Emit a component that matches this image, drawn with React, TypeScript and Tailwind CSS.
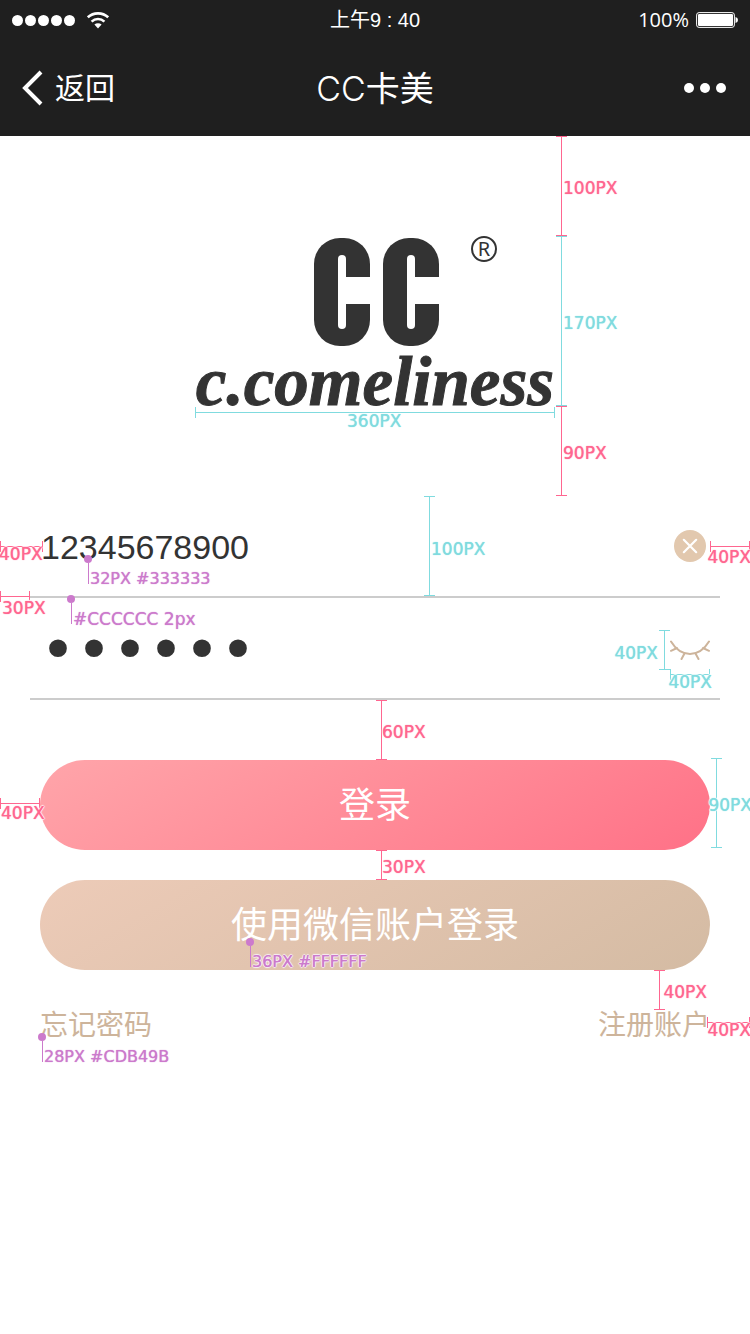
import React, { useState } from "react";

const TONES = {
  pink: "text-[#ff6690]",
  cyan: "text-[#80dbdf]",
  purple: "text-[#cc7acc]",
};

type Tone = keyof typeof TONES;

const HALO =
  "[text-shadow:0_0_1px_currentColor,1px_0_1px_#fff,-1px_0_1px_#fff,0_1px_1px_#fff,0_-1px_1px_#fff]";

/** Vertical dimension line with end caps. */
function VLine({ tone, at }: { tone: Tone; at: string }) {
  return (
    <span
      className={`pointer-events-none absolute flex w-[11px] justify-center border-y border-current ${TONES[tone]} ${at}`}
    >
      <span className="w-px bg-current" />
    </span>
  );
}

/** Horizontal dimension line with end caps. */
function HLine({ tone, at }: { tone: Tone; at: string }) {
  return (
    <span
      className={`pointer-events-none absolute flex h-[11px] flex-col justify-center border-x border-current ${TONES[tone]} ${at}`}
    >
      <span className="h-px bg-current" />
    </span>
  );
}

function Label({ tone, at, children }: { tone: Tone; at: string; children: React.ReactNode }) {
  return (
    <span
      className={`pointer-events-none absolute font-['DejaVu_Sans',sans-serif] text-[17px] leading-5 whitespace-nowrap ${HALO} ${TONES[tone]} ${at}`}
    >
      {children}
    </span>
  );
}

/** Style note: a dot on the described element, a stem, and the text. */
function Note({ at, large, children }: { at: string; large?: boolean; children: React.ReactNode }) {
  return (
    <span className={`pointer-events-none absolute flex items-end text-[#cc7acc] ${at}`}>
      <span className="flex w-2 flex-col items-center">
        <span className="size-2 rounded-full bg-current" />
        <span className="h-[21px] w-px bg-current" />
      </span>
      <span
        className={`-mb-[5px] -ml-0.5 font-['DejaVu_Sans',sans-serif] leading-5 whitespace-nowrap ${
          large ? "text-[17px]" : "text-[16px]"
        } ${HALO}`}
      >
        {children}
      </span>
    </span>
  );
}

function StatusBar() {
  return (
    <div className="flex h-10 items-center justify-between px-3">
      <div className="flex flex-1 items-center gap-3">
        <div className="flex gap-[2px]">
          {[0, 1, 2, 3, 4].map((i) => (
            <span key={i} className="size-[11px] rounded-full bg-white" />
          ))}
        </div>
        <svg width="22" height="18" viewBox="0 0 22 18" fill="none" stroke="#fff" strokeWidth="2.6">
          <path d="M.8 6.400C6.400 1 15.600 1 21.200 6.400" />
          <path d="M4.600 10.600c3.600-3.400 9.200-3.400 12.800 0" />
          <path d="M7.400 13.600c2.200-1.900 5-1.900 7.200 0L11 17.400z" fill="#fff" stroke="none" />
        </svg>
      </div>
      <span className="text-[20px] leading-6">上午9 : 40</span>
      <div className="flex flex-1 items-center justify-end gap-[7px]">
        <span className="font-['Open_Sans','Noto_Sans',sans-serif] text-[20px] leading-6">100%</span>
        <svg width="42" height="16" viewBox="0 0 42 16">
          <rect x=".6" y=".6" width="37.800" height="14.800" rx="2.500" fill="none" stroke="#fff" strokeWidth="1" />
          <rect x="2" y="2" width="35" height="12" rx="1.200" fill="#fff" />
          <path d="M39.500 5q2.500.5 2.500 3t-2.500 3z" fill="#fff" />
        </svg>
      </div>
    </div>
  );
}

function NavBar() {
  return (
    <div className="grid h-24 grid-cols-3 items-center px-[22px]">
      <button type="button" className="flex items-center gap-3 justify-self-start text-[30px] leading-9">
        <svg width="21" height="36" viewBox="0 0 21 36" fill="none" stroke="#fff" strokeWidth="4">
          <path d="M19 2 3 18l16 16" />
        </svg>
        <span className="pt-[2px]">返回</span>
      </button>
      <h1 className="pt-[2px] text-center text-[34px] leading-10 whitespace-nowrap">
        <span className="font-['Inter',sans-serif] font-light">CC</span>卡美
      </h1>
      <button type="button" aria-label="更多" className="flex gap-[6px] justify-self-end pr-[2px]">
        {[0, 1, 2].map((i) => (
          <span key={i} className="size-[10px] rounded-full bg-white" />
        ))}
      </button>
    </div>
  );
}

function MarkShape() {
  return (
    <span className="relative block h-[108px] w-14 rounded-[26px] bg-[#333]">
      <span className="absolute top-[17px] left-6 h-[74px] w-2 rounded-full bg-white" />
      <span className="absolute top-[39px] right-0 left-7 h-[27px] bg-white" />
    </span>
  );
}

function Logo() {
  return (
    <div className="relative mx-auto flex h-[170px] w-[360px] flex-col items-center text-[#333]">
      <div role="img" aria-label="CC" className="flex gap-[13px] pt-[2px] pl-[3px]">
        <MarkShape />
        <MarkShape />
      </div>
      <span className="absolute top-0 right-[58px] flex size-[26px] items-center justify-center rounded-full border-2 border-[#333] font-['Noto_Sans',sans-serif] text-[20px] leading-5">
        R
      </span>
      <p className="font-['Liberation_Serif',serif] text-[69px] leading-[72px] font-bold whitespace-nowrap italic [-webkit-text-stroke:1px_#333]">
        c.comeliness
      </p>
    </div>
  );
}

export default function App() {
  const [phone, setPhone] = useState("12345678900");
  const [password, setPassword] = useState("123456");
  const [visible, setVisible] = useState(false);

  return (
    <div className="min-h-screen w-full overflow-x-hidden bg-white font-['Liberation_Sans','Noto_Sans_CJK_SC',sans-serif]">
      <header className="bg-[#1f1f1f] text-white">
        <StatusBar />
        <NavBar />
      </header>

      <main>
        <section className="relative pt-[100px] pb-[90px]">
          <Logo />
          <VLine tone="cyan" at="left-[556px] top-[100px] h-[170px]" />
          <VLine tone="pink" at="left-[556px] top-0 h-[100px]" />
          <Label tone="pink" at="left-[563px] top-[42px]">100PX</Label>
          <Label tone="cyan" at="left-[563px] top-[177px]">170PX</Label>
          <VLine tone="pink" at="left-[556px] top-[270px] h-[90px]" />
          <Label tone="pink" at="left-[563px] top-[307px]">90PX</Label>
          <HLine tone="cyan" at="left-[195px] top-[271px] w-[360px]" />
          <Label tone="cyan" at="left-[347px] top-[275px]">360PX</Label>
        </section>

        <form onSubmit={(e) => e.preventDefault()}>
          <div className="relative px-[30px]">
            <div className="flex h-[102px] items-center border-b-2 border-[#ccc] px-[10px]">
              <input
                type="tel"
                aria-label="手机号"
                value={phone}
                onChange={(e) => setPhone(e.target.value)}
                className="h-20 min-w-0 flex-1 bg-transparent pt-[2px] pl-px text-[34px] text-[#333] outline-none"
              />
              <button
                type="button"
                aria-label="清除"
                onClick={() => setPhone("")}
                className="flex size-10 items-center justify-center"
              >
                <svg width="32" height="32" viewBox="0 0 32 32">
                  <circle cx="16" cy="16" r="16" fill="#e2c8ae" />
                  <path d="m9.800 9.800 12.400 12.400m0-12.400-12.400 12.400" stroke="#fff" strokeWidth="2.200" strokeLinecap="round" />
                </svg>
              </button>
            </div>
            <HLine tone="pink" at="left-0 top-[45px] w-[43px]" />
            <Label tone="pink" at="-left-px top-[48px]">40PX</Label>
            <HLine tone="pink" at="right-0 top-[45px] w-10" />
            <Label tone="pink" at="-right-px top-[51px]">40PX</Label>
            <VLine tone="cyan" at="left-[424px] top-0 h-[100px]" />
            <Label tone="cyan" at="left-[431px] top-[43px]">100PX</Label>
            <Note at="left-[84px] top-[59px]">32PX #333333</Note>
            <HLine tone="pink" at="left-0 top-[95px] w-[30px]" />
            <Label tone="pink" at="left-[2px] top-[102px]">30PX</Label>
            <Note large at="left-[67px] top-[99px]">#CCCCCC 2px</Note>
          </div>

          <div className="relative px-[30px]">
            <div className="flex h-[102px] items-center border-b-2 border-[#ccc] px-[10px]">
              <input
                type={visible ? "text" : "password"}
                aria-label="密码"
                value={password}
                onChange={(e) => setPassword(e.target.value)}
                className="h-20 min-w-0 flex-1 bg-transparent pt-1 font-['DejaVu_Sans',sans-serif] text-[61px] text-[#333] outline-none"
              />
              <button type="button" aria-label="显示密码" onClick={() => setVisible(!visible)}>
                <svg
                  width="40"
                  height="40"
                  viewBox="0 0 40 40"
                  fill="none"
                  stroke="#cdb49b"
                  strokeWidth="2"
                  strokeLinecap="round"
                >
                  <path d="M1 13.500c10 16.500 28 16.500 38 0M7 20 1 22.800M33 20 39 22.800M14.500 25.500l-3 5.500M25.500 25.500l3 5.500" />
                </svg>
              </button>
            </div>
            <VLine tone="cyan" at="right-[80px] top-8 h-10" />
            <Label tone="cyan" at="right-[92px] top-[45px]">40PX</Label>
            <HLine tone="cyan" at="right-10 top-[71px] w-10" />
            <Label tone="cyan" at="right-[38px] top-[74px]">40PX</Label>
          </div>

          <div className="relative flex flex-col gap-[30px] px-10 pt-[60px] text-[36px] text-white">
            <button type="submit" className="h-[90px] rounded-full bg-linear-150 from-[#ffa5aa] to-[#ff7187] pt-[2px]">
              登录
            </button>
            <button type="button" className="h-[90px] rounded-full bg-linear-150 from-[#edcbb8] to-[#d4bba3] pt-[2px]">
              使用微信账户登录
            </button>
            <VLine tone="pink" at="left-[376px] top-0 h-[60px]" />
            <Label tone="pink" at="left-[382px] top-[22px]">60PX</Label>
            <HLine tone="pink" at="left-0 top-[98px] w-10" />
            <Label tone="pink" at="left-px top-[103px]">40PX</Label>
            <VLine tone="cyan" at="right-7 top-[58px] h-[90px]" />
            <Label tone="cyan" at="-right-[2px] top-[95px]">90PX</Label>
            <VLine tone="pink" at="left-[376px] top-[150px] h-[30px]" />
            <Label tone="pink" at="left-[382px] top-[157px]">30PX</Label>
            <Note at="left-[246px] top-[238px]">36PX #FFFFFF</Note>
          </div>

          <div className="relative flex justify-between px-10 pt-10 text-[28px] leading-8 text-[#cdb49b]">
            <a href="#forgot">忘记密码</a>
            <a href="#register">注册账户</a>
            <VLine tone="pink" at="right-[85px] top-0 h-10" />
            <Label tone="pink" at="right-[43px] top-[12px]">40PX</Label>
            <HLine tone="pink" at="right-0 top-[47px] w-[43px]" />
            <Label tone="pink" at="-right-px top-[50px]">40PX</Label>
            <Note at="left-[38px] top-[63px]">28PX #CDB49B</Note>
          </div>
        </form>
      </main>
    </div>
  );
}
